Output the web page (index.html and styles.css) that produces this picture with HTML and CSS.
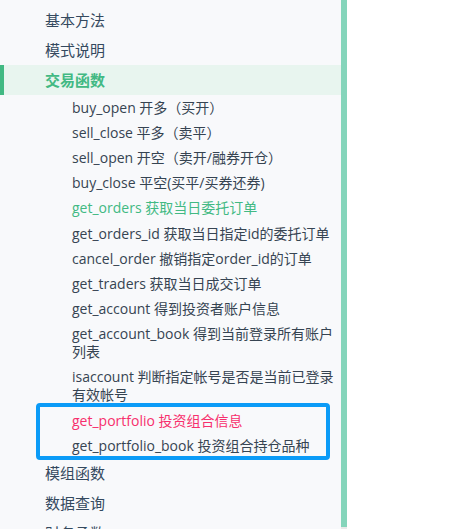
FILE: index.html
```html
<!DOCTYPE html>
<html lang="zh-CN">
<head>
<meta charset="utf-8">
<title>交易函数</title>
<link rel="stylesheet" href="styles.css">
</head>
<body>
<div class="layout">
  <aside class="sidebar">
    <ul class="nav">
      <li class="nav-item">基本方法</li>
      <li class="nav-item">模式说明</li>
      <li class="nav-item active">交易函数</li>
      <li class="sub">
        <ul class="sub-list">
          <li class="sub-item">buy_open 开多（买开）</li>
          <li class="sub-item">sell_close 平多（卖平）</li>
          <li class="sub-item">sell_open 开空（卖开/融券开仓）</li>
          <li class="sub-item">buy_close 平空(买平/买券还券)</li>
          <li class="sub-item hover">get_orders 获取当日委托订单</li>
          <li class="sub-item">get_orders_id 获取当日指定id的委托订单</li>
          <li class="sub-item">cancel_order 撤销指定order_id的订单</li>
          <li class="sub-item">get_traders 获取当日成交订单</li>
          <li class="sub-item">get_account 得到投资者账户信息</li>
          <li class="sub-item">get_account_book 得到当前登录所有账户列表</li>
          <li class="sub-item">isaccount 判断指定帐号是否是当前已登录有效帐号</li>
          <li class="sub-item current">get_portfolio 投资组合信息</li>
          <li class="sub-item">get_portfolio_book 投资组合持仓品种</li>
        </ul>
      </li>
      <li class="nav-item">模组函数</li>
      <li class="nav-item">数据查询</li>
      <li class="nav-item">财务函数</li>
    </ul>
    <div class="highlight-box"></div>
  </aside>
  <div class="scroll-bar"></div>
  <main class="content"></main>
</div>
</body>
</html>
```
FILE: styles.css
```css
html, body {
  margin: 0;
  padding: 0;
  height: 100%;
  overflow: hidden;
  background: #ffffff;
}
body {
  font-family: "Open Sans", "Noto Sans CJK SC", sans-serif;
  color: #34495e;
}
.layout {
  display: flex;
  height: 100vh;
}
.sidebar {
  position: relative;
  width: 341px;
  flex: none;
  background: #f8f9fb;
  overflow: hidden;
}
.nav, .sub-list {
  list-style: none;
  margin: 0;
  padding: 0;
}
.nav {
  padding-top: 5px;
}
.nav-item {
  height: 30px;
  line-height: 30px;
  padding-left: 45px;
  font-size: 15px;
  color: #34495e;
  box-sizing: border-box;
}
.nav-item.active {
  background: #e8f5ef;
  border-left: 4px solid #42b983;
  padding-left: 41px;
  color: #42b983;
  font-weight: 700;
}
.sub-list {
  padding: 0 2px 0 72px;
}
.sub-item {
  font-size: 14px;
  line-height: 18px;
  padding: 3.6px 0;
  color: #364452;
}
.sub-item.hover {
  color: #42b983;
}
.sub-item.current {
  color: #f7306d;
}
.highlight-box {
  position: absolute;
  left: 36px;
  top: 403px;
  width: 294px;
  height: 57px;
  box-sizing: border-box;
  border: 4px solid #0b9bf7;
  border-radius: 4px;
}
.scroll-bar {
  width: 6px;
  flex: none;
  height: 527px;
  background: #85d5bb;
  border-bottom: 2px solid #e9e9e9;
}
.content {
  flex: 1;
  background: #ffffff;
}
```
